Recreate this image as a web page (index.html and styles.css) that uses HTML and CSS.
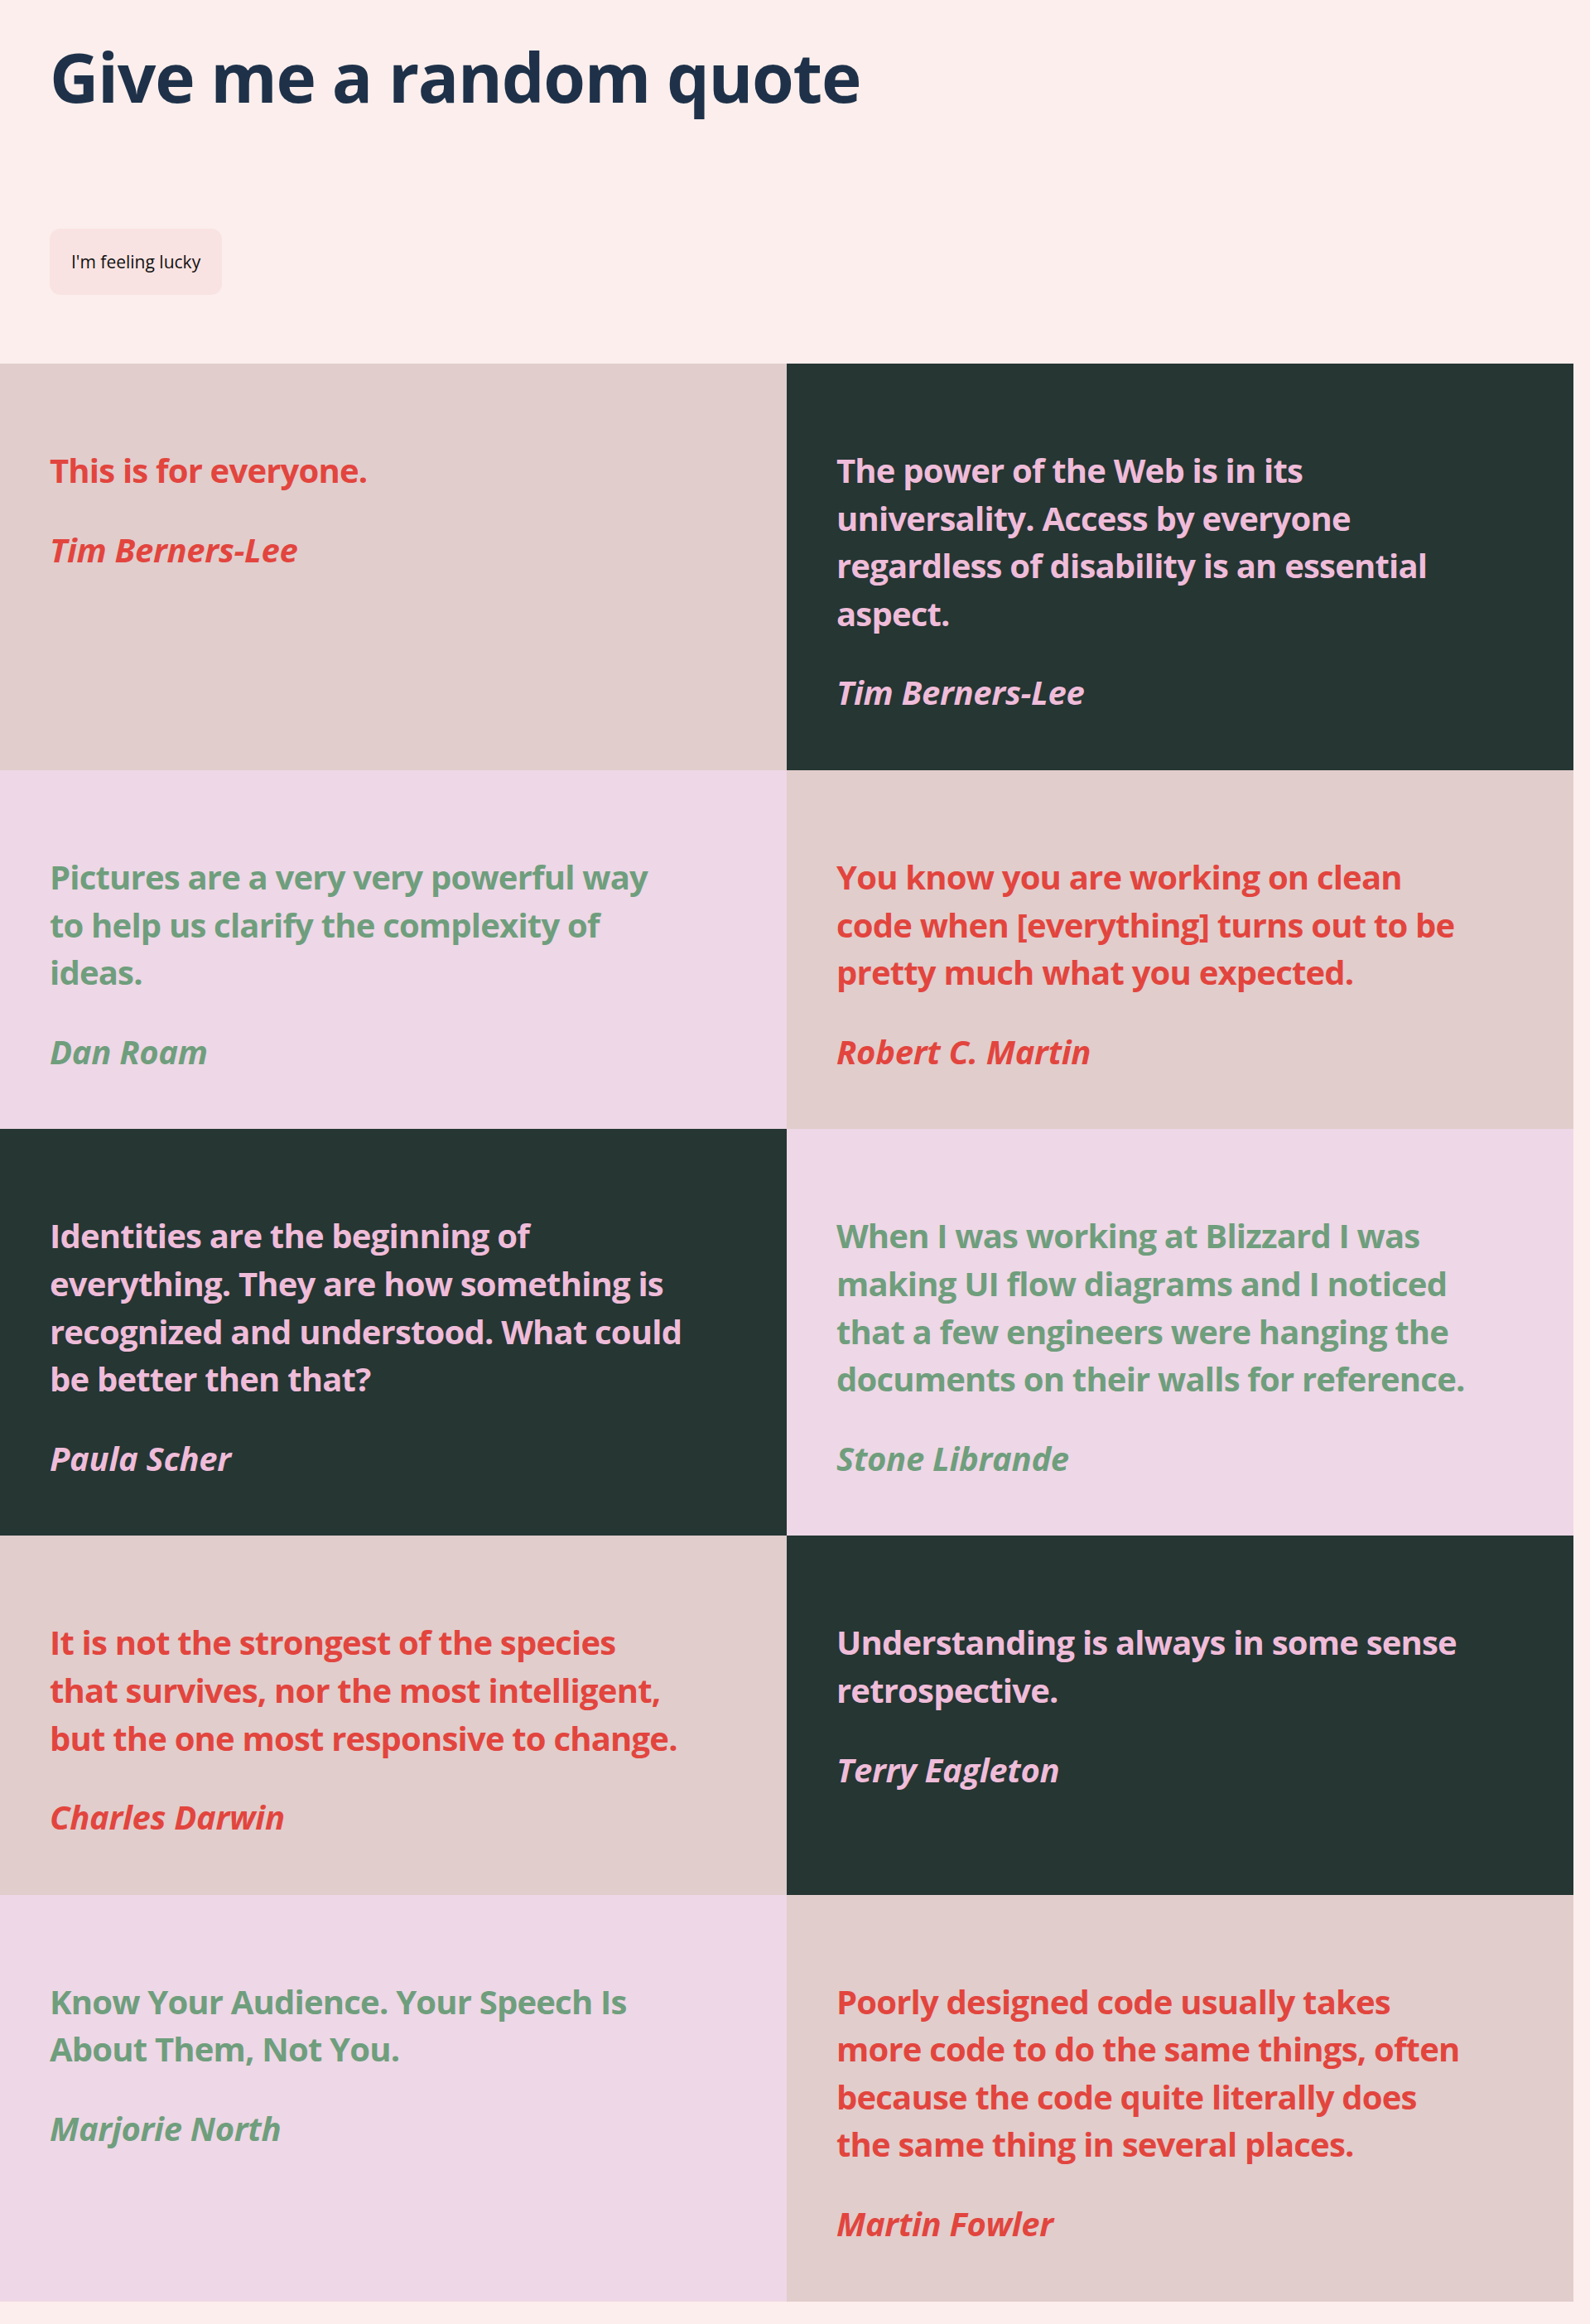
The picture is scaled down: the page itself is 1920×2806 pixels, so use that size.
FILE: index.html
```html
<!DOCTYPE html>
<html lang="en">
<head>
<meta charset="utf-8">
<title>Give me a random quote</title>
<link rel="stylesheet" href="styles.css">
</head>
<body>
<header class="header">
  <h1 class="title">Give me a random quote</h1>
  <button class="lucky" type="button">I'm feeling lucky</button>
</header>
<main class="quotes">
  <figure class="quote tone-rose">
    <blockquote class="quote-text">This is for everyone.</blockquote>
    <figcaption class="quote-author">Tim Berners-Lee</figcaption>
  </figure>
  <figure class="quote tone-dark">
    <blockquote class="quote-text">The power of the Web is in its universality. Access by everyone regardless of disability is an essential aspect.</blockquote>
    <figcaption class="quote-author">Tim Berners-Lee</figcaption>
  </figure>
  <figure class="quote tone-lilac">
    <blockquote class="quote-text">Pictures are a very very powerful way to help us clarify the complexity of ideas.</blockquote>
    <figcaption class="quote-author">Dan Roam</figcaption>
  </figure>
  <figure class="quote tone-rose">
    <blockquote class="quote-text">You know you are working on clean code when [everything] turns out to be pretty much what you expected.</blockquote>
    <figcaption class="quote-author">Robert C. Martin</figcaption>
  </figure>
  <figure class="quote tone-dark">
    <blockquote class="quote-text">Identities are the beginning of everything. They are how something is recognized and understood. What could be better then that?</blockquote>
    <figcaption class="quote-author">Paula Scher</figcaption>
  </figure>
  <figure class="quote tone-lilac">
    <blockquote class="quote-text">When I was working at Blizzard I was making UI flow diagrams and I noticed that a few engineers were hanging the documents on their walls for reference.</blockquote>
    <figcaption class="quote-author">Stone Librande</figcaption>
  </figure>
  <figure class="quote tone-rose">
    <blockquote class="quote-text">It is not the strongest of the species that survives, nor the most intelligent, but the one most responsive to change.</blockquote>
    <figcaption class="quote-author">Charles Darwin</figcaption>
  </figure>
  <figure class="quote tone-dark">
    <blockquote class="quote-text">Understanding is always in some sense retrospective.</blockquote>
    <figcaption class="quote-author">Terry Eagleton</figcaption>
  </figure>
  <figure class="quote tone-lilac">
    <blockquote class="quote-text">Know Your Audience. Your Speech Is About Them, Not You.</blockquote>
    <figcaption class="quote-author">Marjorie North</figcaption>
  </figure>
  <figure class="quote tone-rose">
    <blockquote class="quote-text">Poorly designed code usually takes more code to do the same things, often because the code quite literally does the same thing in several places.</blockquote>
    <figcaption class="quote-author">Martin Fowler</figcaption>
  </figure>
</main>
</body>
</html>
```
FILE: styles.css
```css
html {
  background: #fbeeec;
}

body {
  margin: 0;
  padding: 0 0 27px;
  font-family: "Open Sans", "Liberation Sans", sans-serif;
  color: #1e3149;
}

.header {
  display: flex;
  flex-direction: column;
  align-items: flex-start;
  padding: 43px 60px 83px;
}

.title {
  margin: 0 0 135px;
  font-size: 82px;
  line-height: 98px;
  font-weight: 700;
  color: #1e3149;
  letter-spacing: -1.3px;
}

.lucky {
  font-family: "Open Sans", "Liberation Sans", sans-serif;
  font-size: 21px;
  line-height: 20px;
  padding: 30px 26px;
  border: 0;
  border-radius: 13px;
  background: #f9e3e2;
  color: #111;
}

.quotes {
  display: grid;
  grid-template-columns: 950px 950px;
  width: 1900px;
}

.quote {
  margin: 0;
  padding: 100px 120px 65px 60px;
}

.quote-text {
  margin: 0 0 38px;
  font-size: 40px;
  line-height: 57.6px;
  font-weight: 700;
  letter-spacing: -0.8px;
}

.quote-author {
  font-size: 40px;
  line-height: 57.6px;
  font-weight: 700;
  font-style: italic;
  letter-spacing: -0.3px;
}

.tone-rose {
  background: #e1cdcc;
  color: #e2453e;
}

.tone-dark {
  background: #253633;
  color: #efbcd9;
}

.tone-lilac {
  background: #eed7e6;
  color: #6f9e7d;
}
```
